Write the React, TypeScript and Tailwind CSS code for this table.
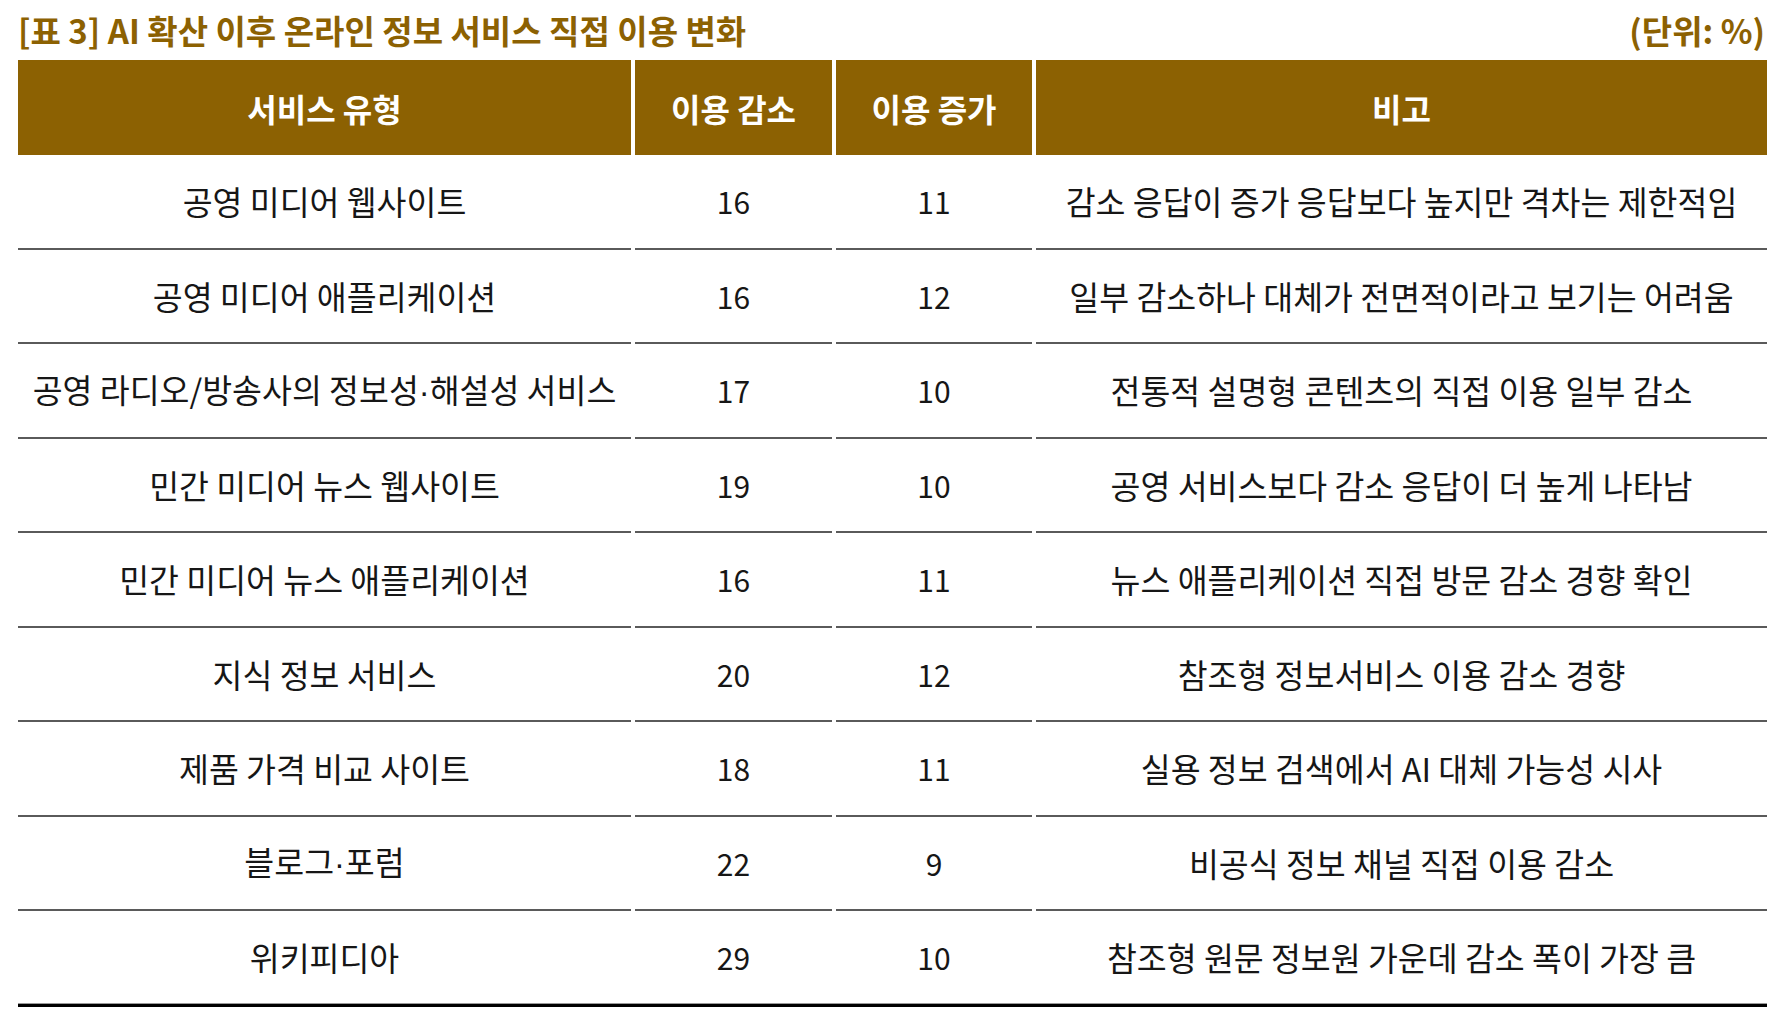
import React from "react";

const rows: [string, string, string, string][] = [
  ["공영 미디어 웹사이트", "16", "11", "감소 응답이 증가 응답보다 높지만 격차는 제한적임"],
  ["공영 미디어 애플리케이션", "16", "12", "일부 감소하나 대체가 전면적이라고 보기는 어려움"],
  ["공영 라디오/방송사의 정보성·해설성 서비스", "17", "10", "전통적 설명형 콘텐츠의 직접 이용 일부 감소"],
  ["민간 미디어 뉴스 웹사이트", "19", "10", "공영 서비스보다 감소 응답이 더 높게 나타남"],
  ["민간 미디어 뉴스 애플리케이션", "16", "11", "뉴스 애플리케이션 직접 방문 감소 경향 확인"],
  ["지식 정보 서비스", "20", "12", "참조형 정보서비스 이용 감소 경향"],
  ["제품 가격 비교 사이트", "18", "11", "실용 정보 검색에서 AI 대체 가능성 시사"],
  ["블로그·포럼", "22", "9", "비공식 정보 채널 직접 이용 감소"],
  ["위키피디아", "29", "10", "참조형 원문 정보원 가운데 감소 폭이 가장 큼"],
];

function withDot(s: string) {
  const parts = s.split("·");
  return parts.map((p, i) => (
    <React.Fragment key={i}>
      {i > 0 && (
        <span className="[font-family:'Liberation_Sans',sans-serif]">·</span>
      )}
      {p}
    </React.Fragment>
  ));
}

export default function App() {
  return (
    <div
      className="w-[1785px] h-[1023px] bg-white pl-[18px] overflow-hidden"
      style={{ fontFamily: '"Noto Sans CJK KR", "Noto Sans", sans-serif' }}
    >
      <div className="w-[1749px]">
        <div className="h-[60px] flex items-center justify-between text-[33px] font-bold text-[#8c6102] leading-none">
          <span>[표 3] AI 확산 이후 온라인 정보 서비스 직접 이용 변화</span>
          <span className="mr-[2px]">(단위: %)</span>
        </div>
        <div className="grid grid-cols-[613px_197px_196px_731px] gap-x-[4px]">
          {["서비스 유형", "이용 감소", "이용 증가", "비고"].map((h) => (
            <div
              key={h}
              className="h-[95px] bg-[#8c6102] text-white text-[32px] font-bold flex items-center justify-center leading-none"
            >
              {h}
            </div>
          ))}
          {rows.map((r, i) => {
            const last = i === rows.length - 1;
            const base = last
              ? "h-[92px] flex items-center justify-center text-[#161616] leading-none"
              : "h-[94.5px] flex items-center justify-center text-[#161616] leading-none border-b-2 border-[#5a5a5a]";
            return (
              <React.Fragment key={i}>
                <div className={base + " text-[32.5px]"}>
                  <span>{withDot(r[0])}</span>
                </div>
                <div className={base + " text-[30px]"}>{r[1]}</div>
                <div className={base + " text-[30px]"}>{r[2]}</div>
                <div className={base + " text-[32.5px]"}>{r[3]}</div>
              </React.Fragment>
            );
          })}
        </div>
        <div className="h-[1px] bg-[#9a9a9a]" />
        <div className="h-[3px] bg-black" />
      </div>
    </div>
  );
}
